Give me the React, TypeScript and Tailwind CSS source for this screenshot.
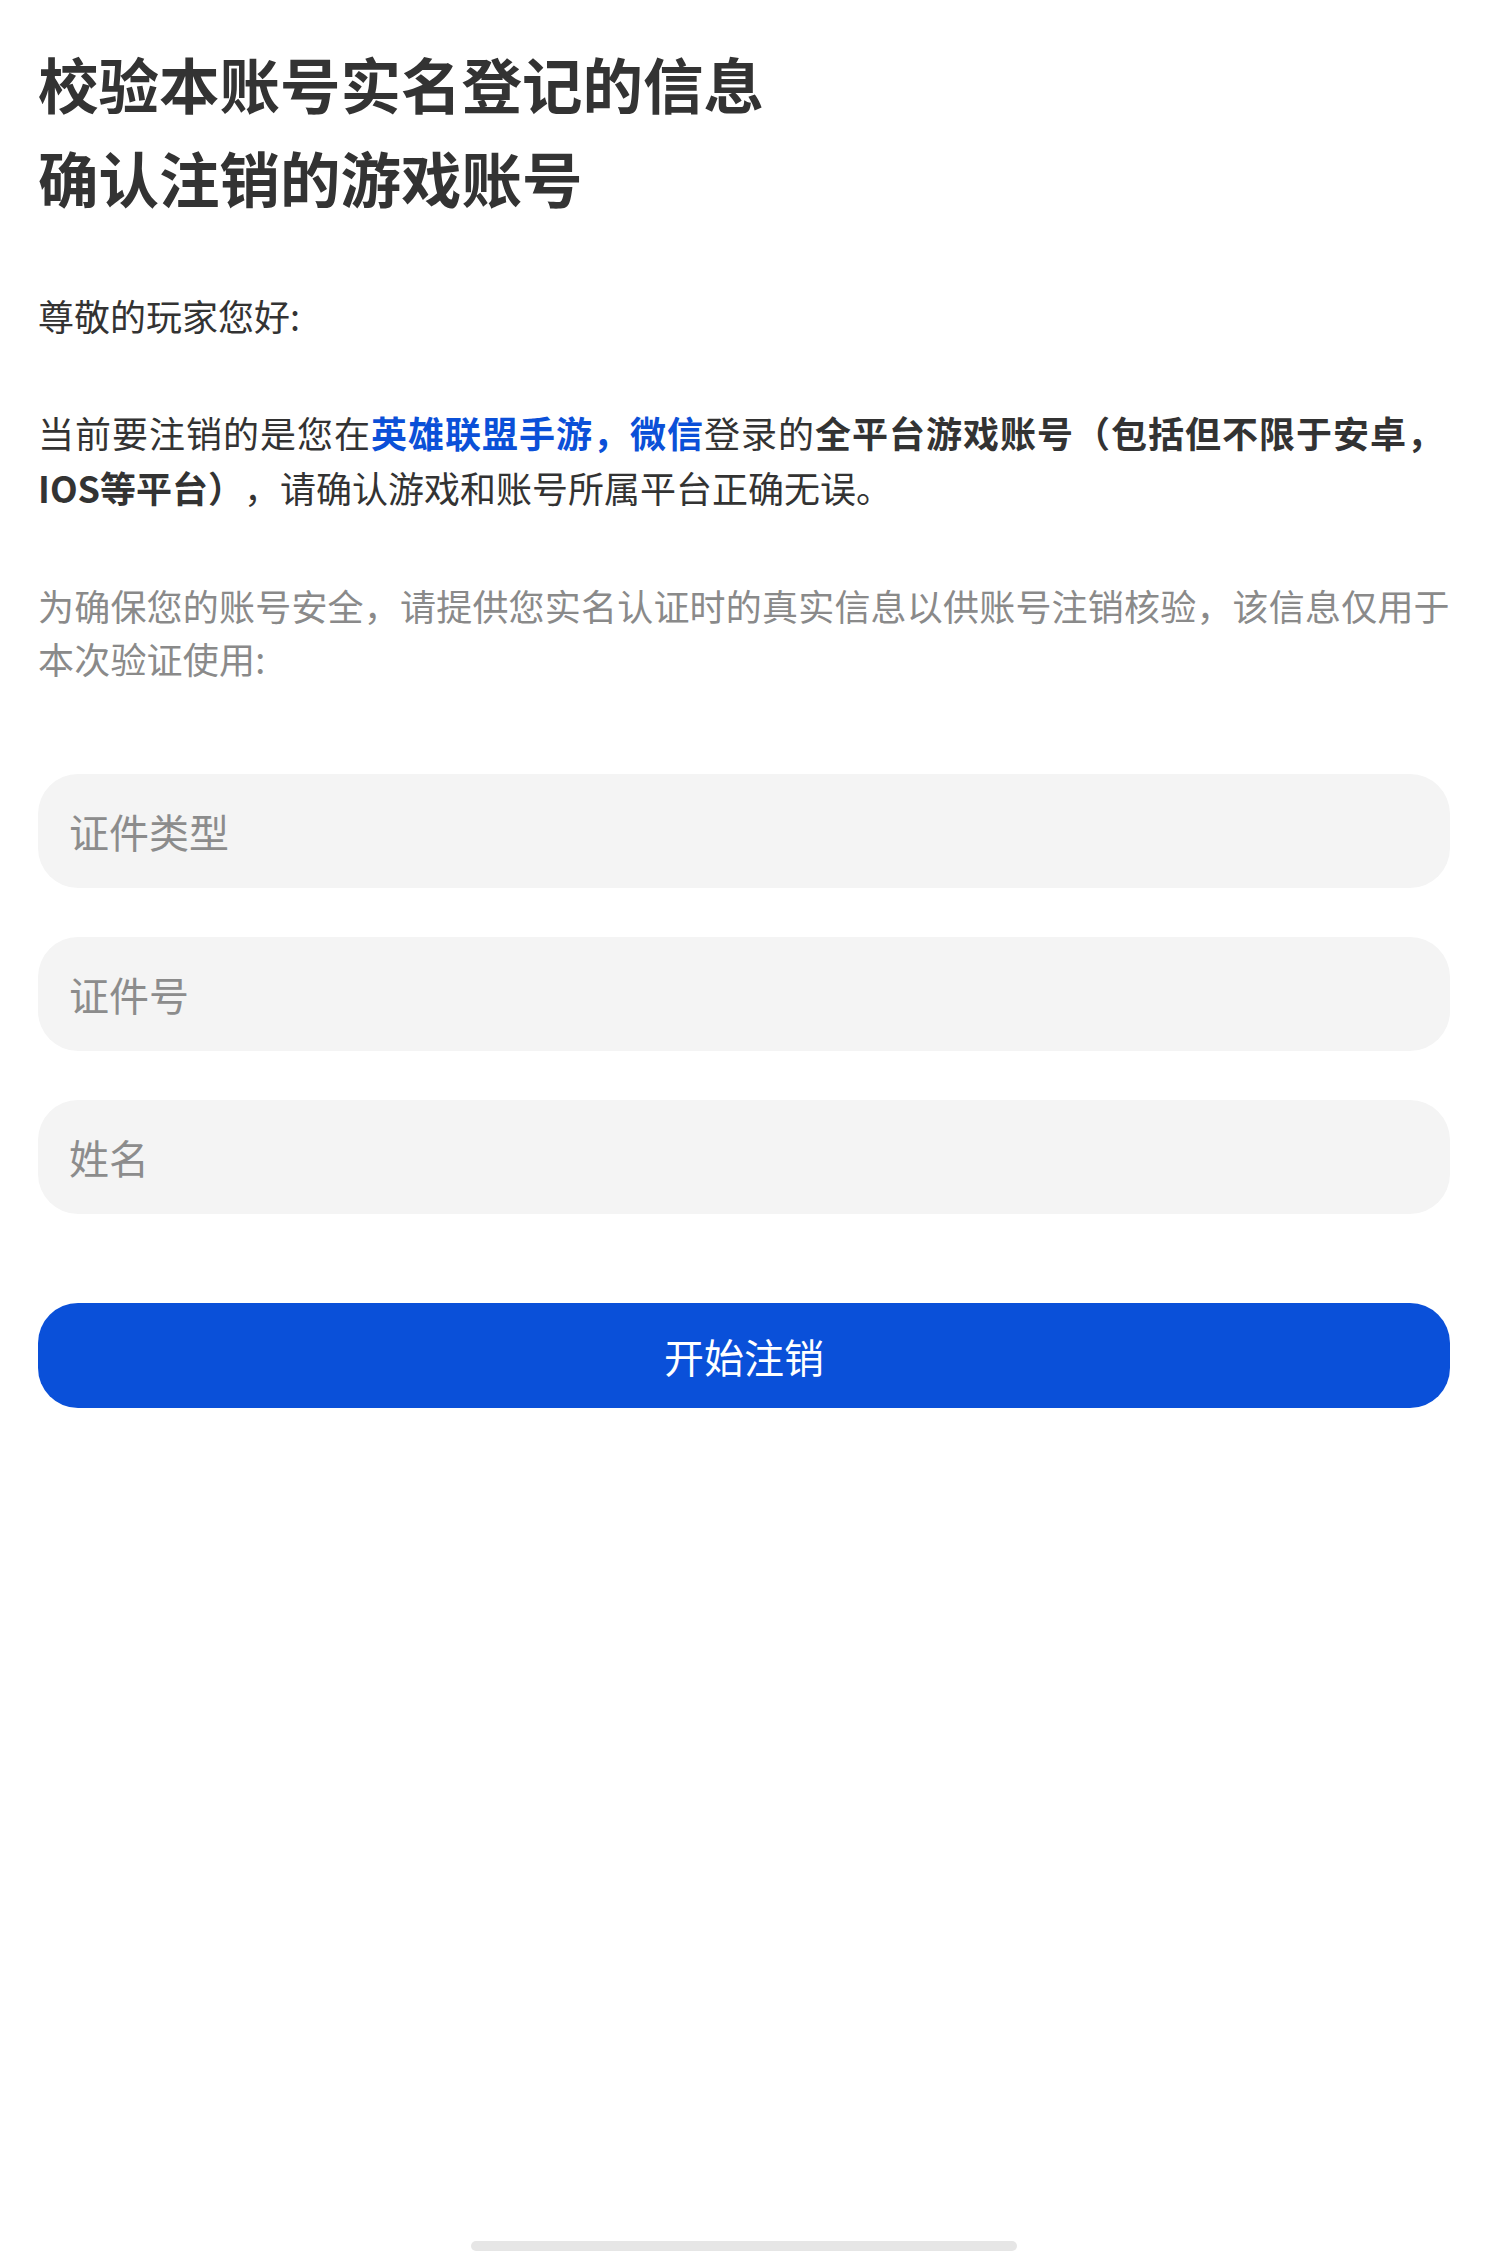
export default function App() {
  return (
    <div className="flex min-h-[2266px] w-full flex-col bg-white px-[38px] font-['Noto_Sans_CJK_SC',sans-serif] text-[#333333]">
      {/* Heading */}
      <h1 className="pt-[36px] text-[60.5px] font-bold leading-[94px]">
        校验本账号实名登记的信息
        <br />
        确认注销的游戏账号
      </h1>

      <p className="mt-[64px] text-[36px] leading-[55px]">尊敬的玩家您好:</p>

      <p className="mt-[62px] text-[36px] leading-[55px]">
        <span className="tracking-[1px]">当前要注销的是您在</span>
        <span className="font-bold tracking-[1px] text-[#0b50d8]">英雄联盟手游，微信</span>
        <span className="tracking-[1px]">登录的</span>
        <span className="font-bold tracking-[1px]">全平台游戏账号（包括但不限于安卓，</span>
        <span className="font-bold [text-spacing-trim:space-all]">IOS等平台）</span>
        <span className="[text-spacing-trim:space-all]">，请确认游戏和账号所属平台正确无误。</span>
      </p>

      <p className="mt-[64px] text-[36px] leading-[53px] tracking-[0.2px] text-[#8a8a8a]">
        为确保您的账号安全，请提供您实名认证时的真实信息以供账号注销核验，该信息仅用于本次验证使用:
      </p>

      {/* Form */}
      <div className="mt-[89px] flex flex-col gap-[49px]">
        <input
          placeholder="证件类型"
          className="h-[114px] w-full rounded-[40px] bg-[#f4f4f4] pl-[31px] text-[40px] text-[#333333] outline-none placeholder:text-[#8c8c8c]"
        />
        <input
          placeholder="证件号"
          className="h-[114px] w-full rounded-[40px] bg-[#f4f4f4] pl-[31px] text-[40px] text-[#333333] outline-none placeholder:text-[#8c8c8c]"
        />
        <input
          placeholder="姓名"
          className="h-[114px] w-full rounded-[40px] bg-[#f4f4f4] pl-[31px] text-[40px] text-[#333333] outline-none placeholder:text-[#8c8c8c]"
        />
      </div>

      <button className="mt-[89px] h-[105px] w-full rounded-[40px] bg-[#0a50d9] text-[40px] text-white">
        开始注销
      </button>

      {/* Home indicator */}
      <div className="mt-auto mb-[15px] flex justify-center">
        <div className="h-[10px] w-[546px] rounded-full bg-[#e6e6e6]" />
      </div>
    </div>
  );
}
